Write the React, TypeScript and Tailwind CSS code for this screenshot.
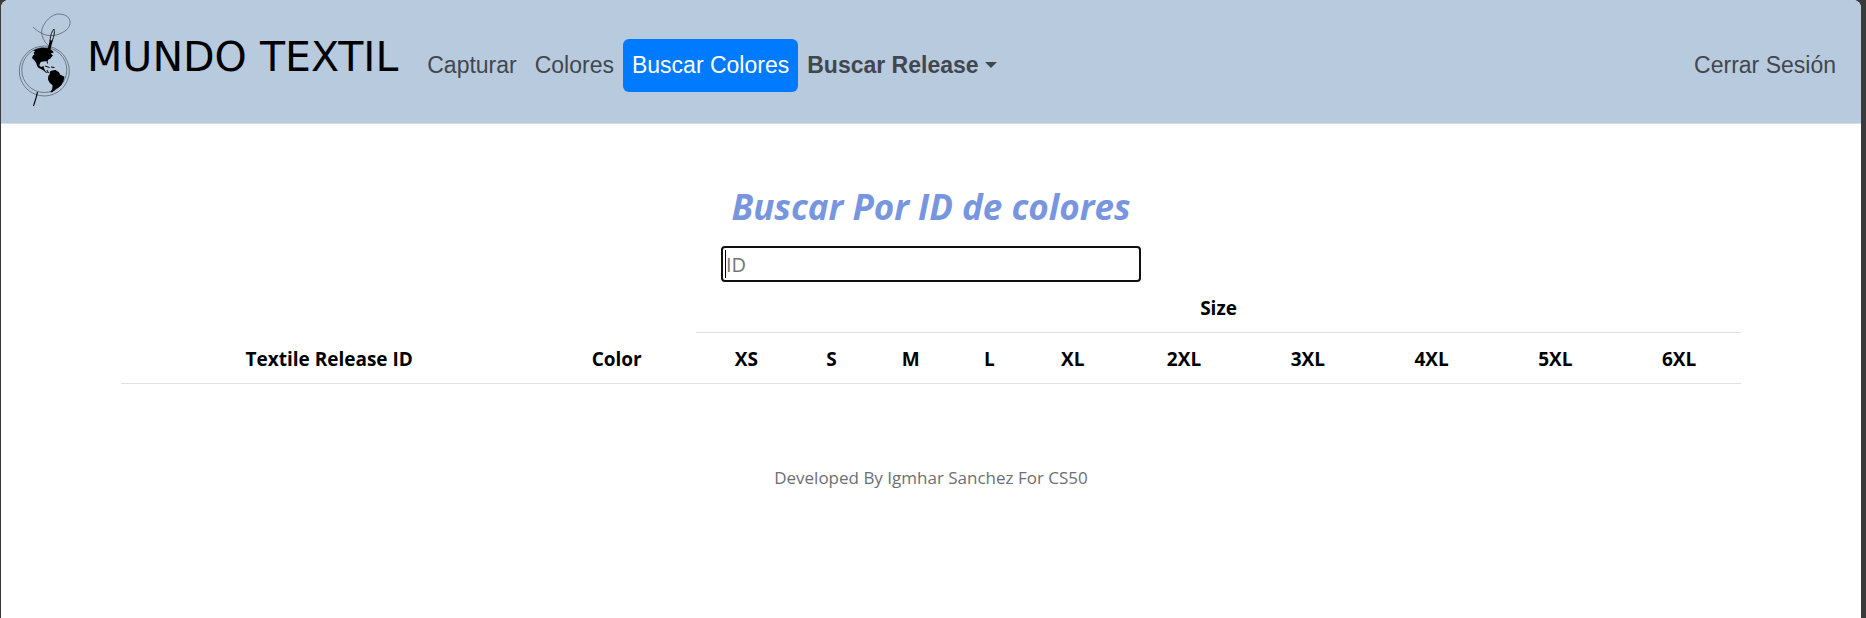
import React from "react";

const sizes = [
  { name: "XS", col: "w-[6.2%]" },
  { name: "S", col: "w-[4.3%]" },
  { name: "M", col: "w-[5.5%]" },
  { name: "L", col: "w-[4.2%]" },
  { name: "XL", col: "w-[6.1%]" },
  { name: "2XL", col: "w-[7.64%]" },
  { name: "3XL", col: "w-[7.64%]" },
  { name: "4XL", col: "w-[7.64%]" },
  { name: "5XL", col: "w-[7.64%]" },
  { name: "6XL", col: "w-[7.64%]" },
];

function Logo() {
  return (
    <svg width="60" height="100" viewBox="0 0 60 100" fill="none" aria-hidden="true">
      <g stroke="#4d5660" strokeWidth="0.7">
        <circle cx="29.3" cy="61" r="25" />
        <circle cx="29.3" cy="60" r="22.5" />
        <path d="M18 17C21 20 24 22 27 23.500C31 25.500 34 26 38 25.500C43 25 47 23 50 21C54 18 55.500 15 55 11C54 6 49 4 43 4C38 4.500 34 8 31 11.500C27 17 26 21 27 25C28 29 30 33 34 36" />
      </g>
      <path d="M39 19C37 21 35.500 25 35 31L37.200 31C39 26 40 22 39 19Z" stroke="#15181b" strokeWidth="1" />
      <path d="M34.700 30.500L37.700 31L35.200 40L32.700 39.500Z" fill="#000" />
      <path d="M22.500 82L21 88L18.500 96" stroke="#000" strokeWidth="1.100" />
      <path
        d="M18.300 40.500L22 38.700L26.700 37.700L34 38.300L37 40.500L39 42.300L35.700 43.500L38 45.500L36.500 47L35.500 48.500L33.500 49.500L32.700 51L30 51.300L26.500 51.700L25 53L24.300 55.500L26 57L28.500 56L29 58L30 60.500L31.500 62L34.300 62.500L31 62.700L28.500 60.500L26 59L23 57.500L22 55.500L21 52.500L19 50L17 48L18 45.500L19.500 44.500L18.500 43L20 41.500Z"
        fill="#000"
      />
      <path d="M32 51L32.500 53.500M30 56L34.500 57.500M36 57L39.500 57.500M32 60L33.500 63" stroke="#000" strokeWidth="1" />
      <path
        d="M35 61.500L37 60.500L40.500 60L44 62.300L45 64.500L49.500 66.700L48.500 71L46 75.500L43.500 77.500L41 79L39 81L36.700 82.500L35.300 82L37 79.500L37.700 75.500L34.500 72.500L33 69.500L33.300 66L34.500 64.500Z"
        fill="#000"
      />
    </svg>
  );
}

const link = "rounded-md px-[9px] py-[10px] text-[23px] leading-[33px]";

export default function App() {
  return (
    <div className="flex min-h-screen flex-col bg-[#3a3a3a] pr-[5px] pl-px font-['Open_Sans','Noto_Sans',sans-serif]">
      <div className="flex-1 rounded-t-lg bg-white">
        <nav className="flex items-center rounded-t-lg border-b border-[#d3deea] bg-[#b8cade] pt-[10px] pr-4 pb-[13px] pl-[14px] font-['Liberation_Sans',Arial,sans-serif] text-[#41474d]">
          <a href="#inicio" className="mr-5 flex items-center gap-3 text-black">
            <Logo />
            <span className="pb-[6px] font-['DejaVu_Sans',Verdana,sans-serif] text-[41px] leading-[60px] whitespace-nowrap">MUNDO TEXTIL</span>
          </a>
          <div className="flex flex-1 items-center pt-[10px]">
            <a href="#capturar" className={link}>Capturar</a>
            <a href="#colores" className={link}>Colores</a>
            <a href="#buscar" aria-current="page" className={`${link} bg-[#007bff] text-white`}>Buscar Colores</a>
            <button type="button" aria-haspopup="menu" className={`${link} flex items-center gap-[6px] font-bold`}>
              Buscar Release
              <span className="border-x-[6px] border-t-[6px] border-x-transparent border-t-current" />
            </button>
            <a href="#salir" className={`${link} ml-auto`}>Cerrar Sesión</a>
          </div>
        </nav>

        <main className="px-[120px] pt-[60px]">
          <form className="flex flex-col items-center">
            <label htmlFor="color-id" className="text-[35px] leading-[46px] font-bold text-[#7895e0] italic">
              Buscar Por ID de colores
            </label>
            <div className="relative mt-4">
              <input
                id="color-id"
                type="text"
                autoFocus
                placeholder="ID"
                className="block h-9 w-[420px] rounded-[4px] border-2 border-[#101010] bg-white px-[3px] text-[20px] caret-transparent outline-none placeholder:text-[#757575]"
              />
              <span className="pointer-events-none absolute inset-y-1 left-1 w-px bg-black" />
            </div>
          </form>
          <table className="w-full table-fixed border-collapse text-center text-[19px] leading-[30px] text-black">
            <colgroup>
              <col className="w-[25.7%]" />
              <col className="w-[9.8%]" />
              {sizes.map((s) => (
                <col key={s.name} className={s.col} />
              ))}
            </colgroup>
            <thead>
              <tr>
                <td colSpan={2} />
                <th colSpan={10} scope="colgroup" className="border-b border-[#dee2e6] px-2 pt-[11px] pb-[9px]">Size</th>
              </tr>
              <tr className="border-b border-[#dee2e6]">
                <th scope="col" className="pt-[11px] pb-[9px]">Textile Release ID</th>
                <th scope="col" className="pt-[11px] pb-[9px]">Color</th>
                {sizes.map((s) => (
                  <th key={s.name} scope="col" className="pt-[11px] pb-[9px]">{s.name}</th>
                ))}
              </tr>
            </thead>
          </table>
        </main>

        <footer className="pt-20 text-center text-[17px] leading-[27px] text-[#6c6f73]">
          Developed By Igmhar Sanchez For CS50
        </footer>
      </div>
    </div>
  );
}
